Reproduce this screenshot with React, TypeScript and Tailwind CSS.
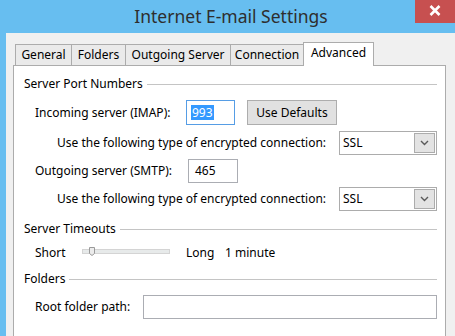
import React from "react";

function Header({ title }: { title: string }) {
  return (
    <div className="h-[20px] flex items-center shrink-0">
      <span className="whitespace-nowrap">{title}</span>
      <div className="flex-1 h-px bg-[#c4c4c4] ml-[4px]" />
    </div>
  );
}

function Select() {
  return (
    <div className="w-[98px] h-[24px] border border-[#acacac] bg-white flex items-center pl-[3px] pr-[1px]">
      <span>SSL</span>
      <div className="ml-auto w-[21px] h-[20px] border border-[#acacac] bg-[#e3e3e3] flex items-center justify-center">
        <svg width="9" height="6" viewBox="0 0 9 6">
          <path d="M1 1 L4.5 4.5 L8 1" fill="none" stroke="#5a5a5a" strokeWidth="1.4" />
        </svg>
      </div>
    </div>
  );
}

export default function App() {
  const tabs: [string, string][] = [
    ["General", "w-[56px]"],
    ["Folders", "w-[54px]"],
    ["Outgoing Server", "w-[105px]"],
    ["Connection", "w-[73px]"],
  ];
  return (
    <div className="w-[455px] h-[336px] bg-[#67bef0] flex flex-col overflow-hidden font-['Noto_Sans',sans-serif] text-[12px] text-black">
      <div className="h-[33px] shrink-0 flex relative">
        <div className="flex-1 flex justify-center items-start pl-[7px] pt-[2px]">
          <span className="text-[17.5px] text-[#2e2e2e] leading-[28px]">Internet E-mail Settings</span>
        </div>
        <div className="absolute right-0 top-0 w-[40px] h-[23px] bg-[#c75050] flex items-center justify-center pb-[3px]">
          <svg width="12" height="11" viewBox="0 0 12 11">
            <path d="M1.5 1 L10.5 10 M10.5 1 L1.5 10" stroke="white" strokeWidth="2.6" />
          </svg>
        </div>
      </div>
      <div className="flex-1 ml-[6px] bg-[#f0f0f0] pl-[7px] pt-[9px] flex flex-col">
        <div className="h-[23px] flex items-end pl-[2px] shrink-0">
          {tabs.map(([t, w]) => (
            <div
              key={t}
              className={`${w} h-[21px] border-l border-t border-[#acacac] bg-[#eaeaea] flex items-center justify-center leading-none pb-[1px]`}
            >
              <span className="whitespace-nowrap">{t}</span>
            </div>
          ))}
          <div className="w-[71px] h-[24px] -mb-px relative z-10 border-l border-t border-r border-[#acacac] bg-white flex items-center justify-center leading-none pb-[4px]">
            <span className="whitespace-nowrap">Advanced</span>
          </div>
        </div>
        <div className="flex-1 w-[433px] border border-b-0 border-[#acacac] bg-white pl-[10px] pr-[8px] pt-[8px] flex flex-col">
          <Header title="Server Port Numbers" />
          <div className="mt-[6px] h-[25px] flex items-center pl-[11px]">
            <span className="w-[151px] whitespace-nowrap">Incoming server (IMAP):</span>
            <div className="w-[49px] h-[25px] border border-[#569de5] bg-white flex items-center pl-[4px]">
              <span className="bg-[#3399ff] text-white leading-[15px] px-[1px]">993</span>
            </div>
            <div className="ml-[12px] w-[90px] h-[25px] border border-[#adadad] bg-[#e1e1e1] flex items-center justify-center">
              Use Defaults
            </div>
          </div>
          <div className="mt-[6px] h-[24px] flex items-center pl-[33px]">
            <span className="w-[282px] whitespace-nowrap">Use the following type of encrypted connection:</span>
            <Select />
          </div>
          <div className="mt-[4px] h-[24px] flex items-center pl-[11px]">
            <span className="w-[153px] whitespace-nowrap">Outgoing server (SMTP):</span>
            <div className="w-[50px] h-[24px] border border-[#abadb3] bg-white flex items-center pl-[6px]">
              465
            </div>
          </div>
          <div className="mt-[4px] h-[24px] flex items-center pl-[33px]">
            <span className="w-[282px] whitespace-nowrap">Use the following type of encrypted connection:</span>
            <Select />
          </div>
          <div className="mt-[8px]">
            <Header title="Server Timeouts" />
          </div>
          <div className="mt-[4px] h-[20px] flex items-center pl-[11px]">
            <span className="w-[47px]">Short</span>
            <svg width="88" height="12" viewBox="0 0 88 12">
              <rect x="0.5" y="2.5" width="87" height="4" fill="#e7eaea" stroke="#d4d4d4" />
              <path d="M7.5 0.5 H12.5 V6.5 L10 8.5 L7.5 6.5 Z" fill="#ececec" stroke="#9a9a9a" />
            </svg>
            <span className="ml-[16px] w-[39px]">Long</span>
            <span>1 minute</span>
          </div>
          <div className="mt-[6px]">
            <Header title="Folders" />
          </div>
          <div className="mt-[6px] h-[24px] flex items-center pl-[11px]">
            <span className="w-[108px] whitespace-nowrap">Root folder path:</span>
            <div className="w-[294px] h-[24px] border border-[#abadb3] bg-white" />
          </div>
        </div>
      </div>
    </div>
  );
}
